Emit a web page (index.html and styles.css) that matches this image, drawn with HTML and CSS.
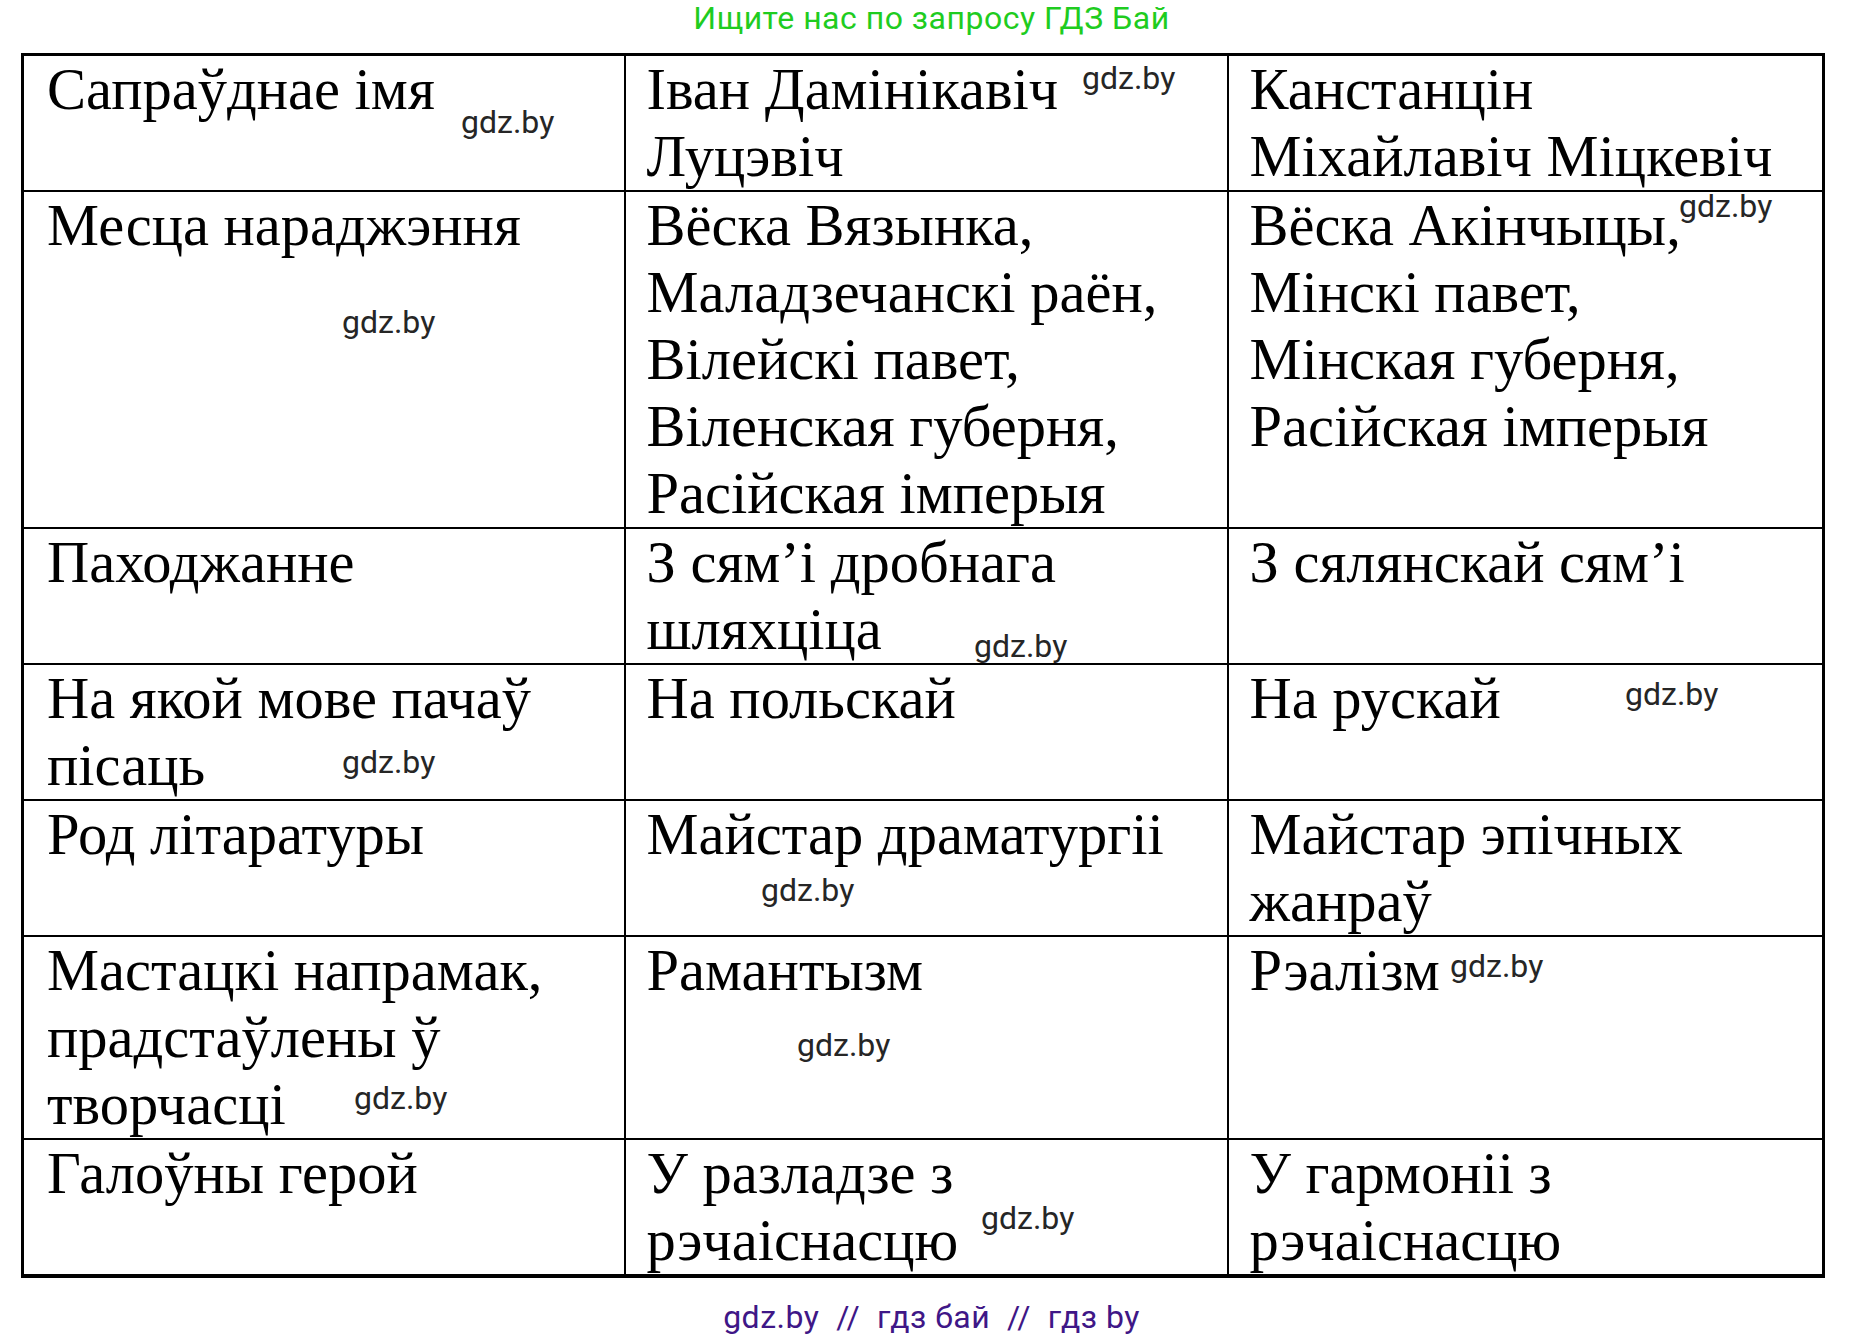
FILE: index.html
```html
<!DOCTYPE html>
<html lang="be">
<head>
<meta charset="utf-8">
<title>ГДЗ</title>
<link rel="stylesheet" href="styles.css">
</head>
<body>
<div class="page">
  <div class="promo">Ищите нас по запросу ГДЗ Бай</div>
  <table class="grid">
    <colgroup><col class="c1"><col class="c2"><col class="c3"></colgroup>
    <tr>
      <td>Сапраўднае імя</td>
      <td>Іван Дамінікавіч<br>Луцэвіч</td>
      <td>Канстанцін<br>Міхайлавіч Міцкевіч</td>
    </tr>
    <tr>
      <td>Месца нараджэння</td>
      <td>Вёска Вязынка,<br>Маладзечанскі раён,<br>Вілейскі павет,<br>Віленская губерня,<br>Расійская імперыя</td>
      <td>Вёска Акінчыцы,<br>Мінскі павет,<br>Мінская губерня,<br>Расійская імперыя</td>
    </tr>
    <tr>
      <td>Паходжанне</td>
      <td>З сям’і дробнага<br>шляхціца</td>
      <td>З сялянскай сям’і</td>
    </tr>
    <tr>
      <td>На якой мове пачаў<br>пісаць</td>
      <td>На польскай</td>
      <td>На рускай</td>
    </tr>
    <tr>
      <td>Род літаратуры</td>
      <td>Майстар драматургіі</td>
      <td>Майстар эпічных<br>жанраў</td>
    </tr>
    <tr>
      <td>Мастацкі напрамак,<br>прадстаўлены ў<br>творчасці</td>
      <td>Рамантызм</td>
      <td>Рэалізм</td>
    </tr>
    <tr>
      <td>Галоўны герой</td>
      <td>У разладзе з<br>рэчаіснасцю</td>
      <td>У гармоніі з<br>рэчаіснасцю</td>
    </tr>
  </table>
  <div class="footer">gdz.by  //  гдз бай  //  гдз by</div>

  <span class="wm" style="left:461px;top:106px">gdz.by</span>
  <span class="wm" style="left:1082px;top:62px">gdz.by</span>
  <span class="wm" style="left:1679px;top:190px">gdz.by</span>
  <span class="wm" style="left:342px;top:306px">gdz.by</span>
  <span class="wm" style="left:974px;top:630px">gdz.by</span>
  <span class="wm" style="left:1625px;top:678px">gdz.by</span>
  <span class="wm" style="left:342px;top:746px">gdz.by</span>
  <span class="wm" style="left:761px;top:874px">gdz.by</span>
  <span class="wm" style="left:1450px;top:950px">gdz.by</span>
  <span class="wm" style="left:797px;top:1029px">gdz.by</span>
  <span class="wm" style="left:354px;top:1082px">gdz.by</span>
  <span class="wm" style="left:981px;top:1202px">gdz.by</span>
</div>
</body>
</html>
```

FILE: styles.css
```css
html, body {
  margin: 0;
  padding: 0;
  background: #ffffff;
}

.page {
  position: relative;
  width: 1863px;
  height: 1337px;
  overflow: hidden;
}

.promo {
  font-family: Roboto, "Noto Sans", sans-serif;
  font-size: 32px;
  letter-spacing: 0.5px;
  line-height: 36px;
  color: #1fcc1f;
  text-align: center;
  height: 36px;
  margin-bottom: 17px;
}

.grid {
  margin-left: 21px;
  border-collapse: collapse;
  table-layout: fixed;
  width: 1801px;
  border: 3px solid #000;
}

.grid .c1 { width: 602px; }
.grid .c2 { width: 603px; }
.grid .c3 { width: 596px; }

.grid td {
  border: 2px solid #000;
  vertical-align: top;
  padding: 0 0 0 21px;
  font-family: "Liberation Serif", "Times New Roman", serif;
  font-size: 58.5px;
  line-height: 67px;
  color: #000;
  white-space: nowrap;
}

.grid tr td:first-child { border-left-width: 3px; padding-left: 23px; }
.grid tr td:last-child { border-right-width: 3px; }
.grid tr:last-child td { border-bottom-width: 4px; }

.footer {
  font-family: Roboto, "Noto Sans", sans-serif;
  font-size: 32px;
  letter-spacing: 0.5px;
  line-height: 34px;
  color: #3f1787;
  text-align: center;
  white-space: pre;
  margin-top: 22px;
}

.wm {
  position: absolute;
  font-family: Roboto, "Noto Sans", sans-serif;
  font-size: 32px;
  line-height: 32px;
  color: #262626;
  white-space: nowrap;
}
```
